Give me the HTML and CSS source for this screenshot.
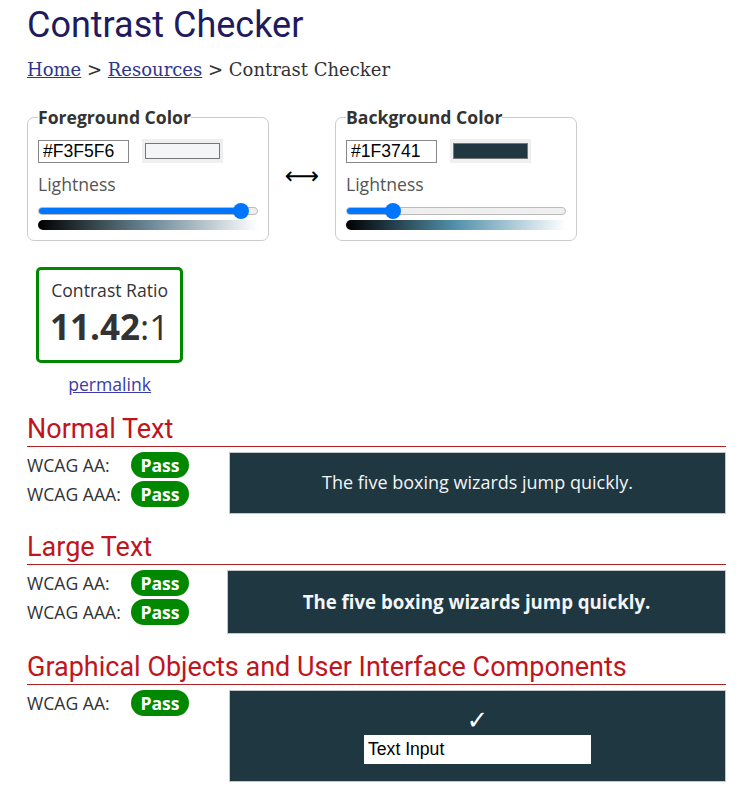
FILE: index.html
```html
<!DOCTYPE html>
<html lang="en">
<head>
<meta charset="utf-8">
<title>Contrast Checker</title>
<link rel="stylesheet" href="styles.css">
</head>
<body>
<main class="page">
  <h1 class="title">Contrast Checker</h1>
  <nav class="crumbs"><a href="#">Home</a> &gt; <a href="#">Resources</a> &gt; Contrast Checker</nav>

  <div class="colors">
    <fieldset class="picker">
      <legend>Foreground Color</legend>
      <div class="hex-row">
        <input class="hex" type="text" value="#F3F5F6">
        <div class="swatch"><div class="swatch-fill fg"></div></div>
      </div>
      <div class="light-label">Lightness</div>
      <div class="slider">
        <div class="track"><div class="fill" style="width:203px"></div></div>
        <div class="thumb" style="left:195px"></div>
      </div>
      <div class="gradient fg-grad"></div>
    </fieldset>

    <div class="swap">&#x27F7;</div>

    <fieldset class="picker">
      <legend>Background Color</legend>
      <div class="hex-row">
        <input class="hex" type="text" value="#1F3741">
        <div class="swatch"><div class="swatch-fill bg"></div></div>
      </div>
      <div class="light-label">Lightness</div>
      <div class="slider">
        <div class="track"><div class="fill" style="width:47px"></div></div>
        <div class="thumb" style="left:39px"></div>
      </div>
      <div class="gradient bg-grad"></div>
    </fieldset>
  </div>

  <div class="ratio-wrap">
    <div class="ratio-box">
      <div class="ratio-label">Contrast Ratio</div>
      <div class="ratio-value"><b>11.42</b>:1</div>
    </div>
    <a class="permalink" href="#">permalink</a>
  </div>

  <section class="level first">
    <h2>Normal Text</h2>
    <div class="result">
      <div class="checks">
        <span class="lbl">WCAG AA:</span><span class="pass">Pass</span>
        <span class="lbl">WCAG AAA:</span><span class="pass">Pass</span>
      </div>
      <div class="sample normal">The five boxing wizards jump quickly.</div>
    </div>
  </section>

  <section class="level">
    <h2>Large Text</h2>
    <div class="result large">
      <div class="checks">
        <span class="lbl">WCAG AA:</span><span class="pass">Pass</span>
        <span class="lbl">WCAG AAA:</span><span class="pass">Pass</span>
      </div>
      <div class="sample big">The five boxing wizards jump quickly.</div>
    </div>
  </section>

  <section class="level">
    <h2>Graphical Objects and User Interface Components</h2>
    <div class="result">
      <div class="checks">
        <span class="lbl">WCAG AA:</span><span class="pass">Pass</span>
      </div>
      <div class="sample ui">
        <div class="check">&#x2713;</div>
        <div class="text-input">Text Input</div>
      </div>
    </div>
  </section>
</main>
</body>
</html>
```

FILE: styles.css
```css
* { box-sizing: border-box; }
body {
  margin: 0;
  font-family: "Open Sans", "DejaVu Sans", sans-serif;
  font-size: 17.6px;
  line-height: 24px;
  color: #333;
  background: #fff;
}
.page {
  width: 743px;
  padding: 0 17px 20px 27px;
}
.title {
  margin: 5px 0 0;
  font: 400 36px/40px Roboto, sans-serif;
  color: #1e1b5e;
}
.crumbs {
  margin-top: 14px;
  font: 18px/21px "DejaVu Serif", serif;
  color: #333;
}
.crumbs a { color: #2d3590; }

.colors {
  display: flex;
  align-items: center;
  margin-top: 25px;
}
.picker {
  margin: 0;
  width: 242px;
  padding: 10px;
  border: 1px solid #ccc;
  border-radius: 7px;
  min-width: 0;
}
.picker legend {
  padding: 0;
  font-weight: 700;
  line-height: 24px;
  color: #333;
}
.hex-row {
  display: flex;
  align-items: center;
  gap: 13px;
}
.hex {
  width: 91px;
  height: 23px;
  margin: 0;
  padding: 0 4px;
  border: 1px solid #888;
  font: 17.6px/21px "Liberation Sans", Arial, sans-serif;
  color: #000;
  background: #fff;
}
.swatch {
  width: 81px;
  height: 24px;
  padding: 4px 3px;
  background: #efefef;
}
.swatch-fill {
  height: 100%;
  border: 1px solid #777;
}
.swatch-fill.fg { background: #F3F5F6; }
.swatch-fill.bg { background: #1F3741; }
.light-label {
  margin-top: 9px;
  color: #555;
}
.slider {
  position: relative;
  height: 16px;
  margin-top: 7px;
  display: flex;
  align-items: center;
}
.track {
  width: 220px;
  height: 8px;
  border-radius: 4px;
  background: #efefef;
  border: 1px solid #bbb;
  overflow: hidden;
  display: flex;
}
.fill {
  background: #0075ff;
  margin: -1px 0 0 -1px;
  height: 8px;
}
.thumb {
  position: absolute;
  top: 0;
  width: 16px;
  height: 16px;
  border-radius: 50%;
  background: #0075ff;
}
.gradient {
  margin-top: 1px;
  height: 10px;
  border-radius: 5px 0 0 5px;
}
.fg-grad { background: linear-gradient(to right, #000, hsl(200, 17%, 50%), #fff); }
.bg-grad { background: linear-gradient(to right, #000, hsl(198, 35%, 50%), #fff); }
.swap {
  width: 66px;
  padding-top: 5px;
  text-align: center;
  font: 24px/30px "DejaVu Sans", sans-serif;
  color: #000;
}

.ratio-wrap {
  display: inline-flex;
  flex-direction: column;
  align-items: center;
  margin: 26px 0 0 9px;
}
.ratio-box {
  border: 3px solid #008800;
  border-radius: 5px;
  padding: 8px 11px 9px;
  text-align: center;
}
.ratio-label { line-height: 24px; }
.ratio-value {
  font-size: 35px;
  line-height: 49px;
  color: #333;
}
.ratio-value b { font-weight: 700; }
.permalink {
  margin-top: 9px;
  color: #3b3bab;
}

.level { margin-top: 16px; }
.level.first { margin-top: 16px; }
.level h2 {
  margin: 0;
  font: 400 27px/34px Roboto, sans-serif;
  color: #c0151d;
  border-bottom: 1px solid #b32222;
}
.result {
  display: flex;
  align-items: flex-start;
  gap: 40px;
  margin-top: 5px;
}
.result.large { gap: 38px; }
.checks {
  display: grid;
  grid-template-columns: 104px 58px;
  row-gap: 3px;
  align-items: center;
}
.lbl { color: #333; }
.pass {
  height: 26px;
  border-radius: 13px;
  background: #008800;
  color: #fff;
  font-weight: 700;
  text-align: center;
  line-height: 26px;
}
.sample {
  flex: 1;
  background: #1F3741;
  border: 1px solid #c6c6c6;
  color: #F3F5F6;
  text-align: center;
}
.sample.normal {
  padding: 17px 8px 19px;
  font-size: 18px;
}
.sample.big {
  padding: 18px 8px 19px;
  font-size: 18.66px;
  font-weight: 700;
  line-height: 25px;
}
.sample.ui {
  padding: 15px 8px 17px;
  display: flex;
  flex-direction: column;
  align-items: center;
}
.check {
  font: 26px/28px "DejaVu Sans", sans-serif;
  color: #fff;
}
.text-input {
  margin-top: 1px;
  width: 227px;
  height: 29px;
  padding: 0 4px;
  background: #fff;
  color: #000;
  text-align: left;
  font: 17.6px/29px "Liberation Sans", Arial, sans-serif;
}
```
